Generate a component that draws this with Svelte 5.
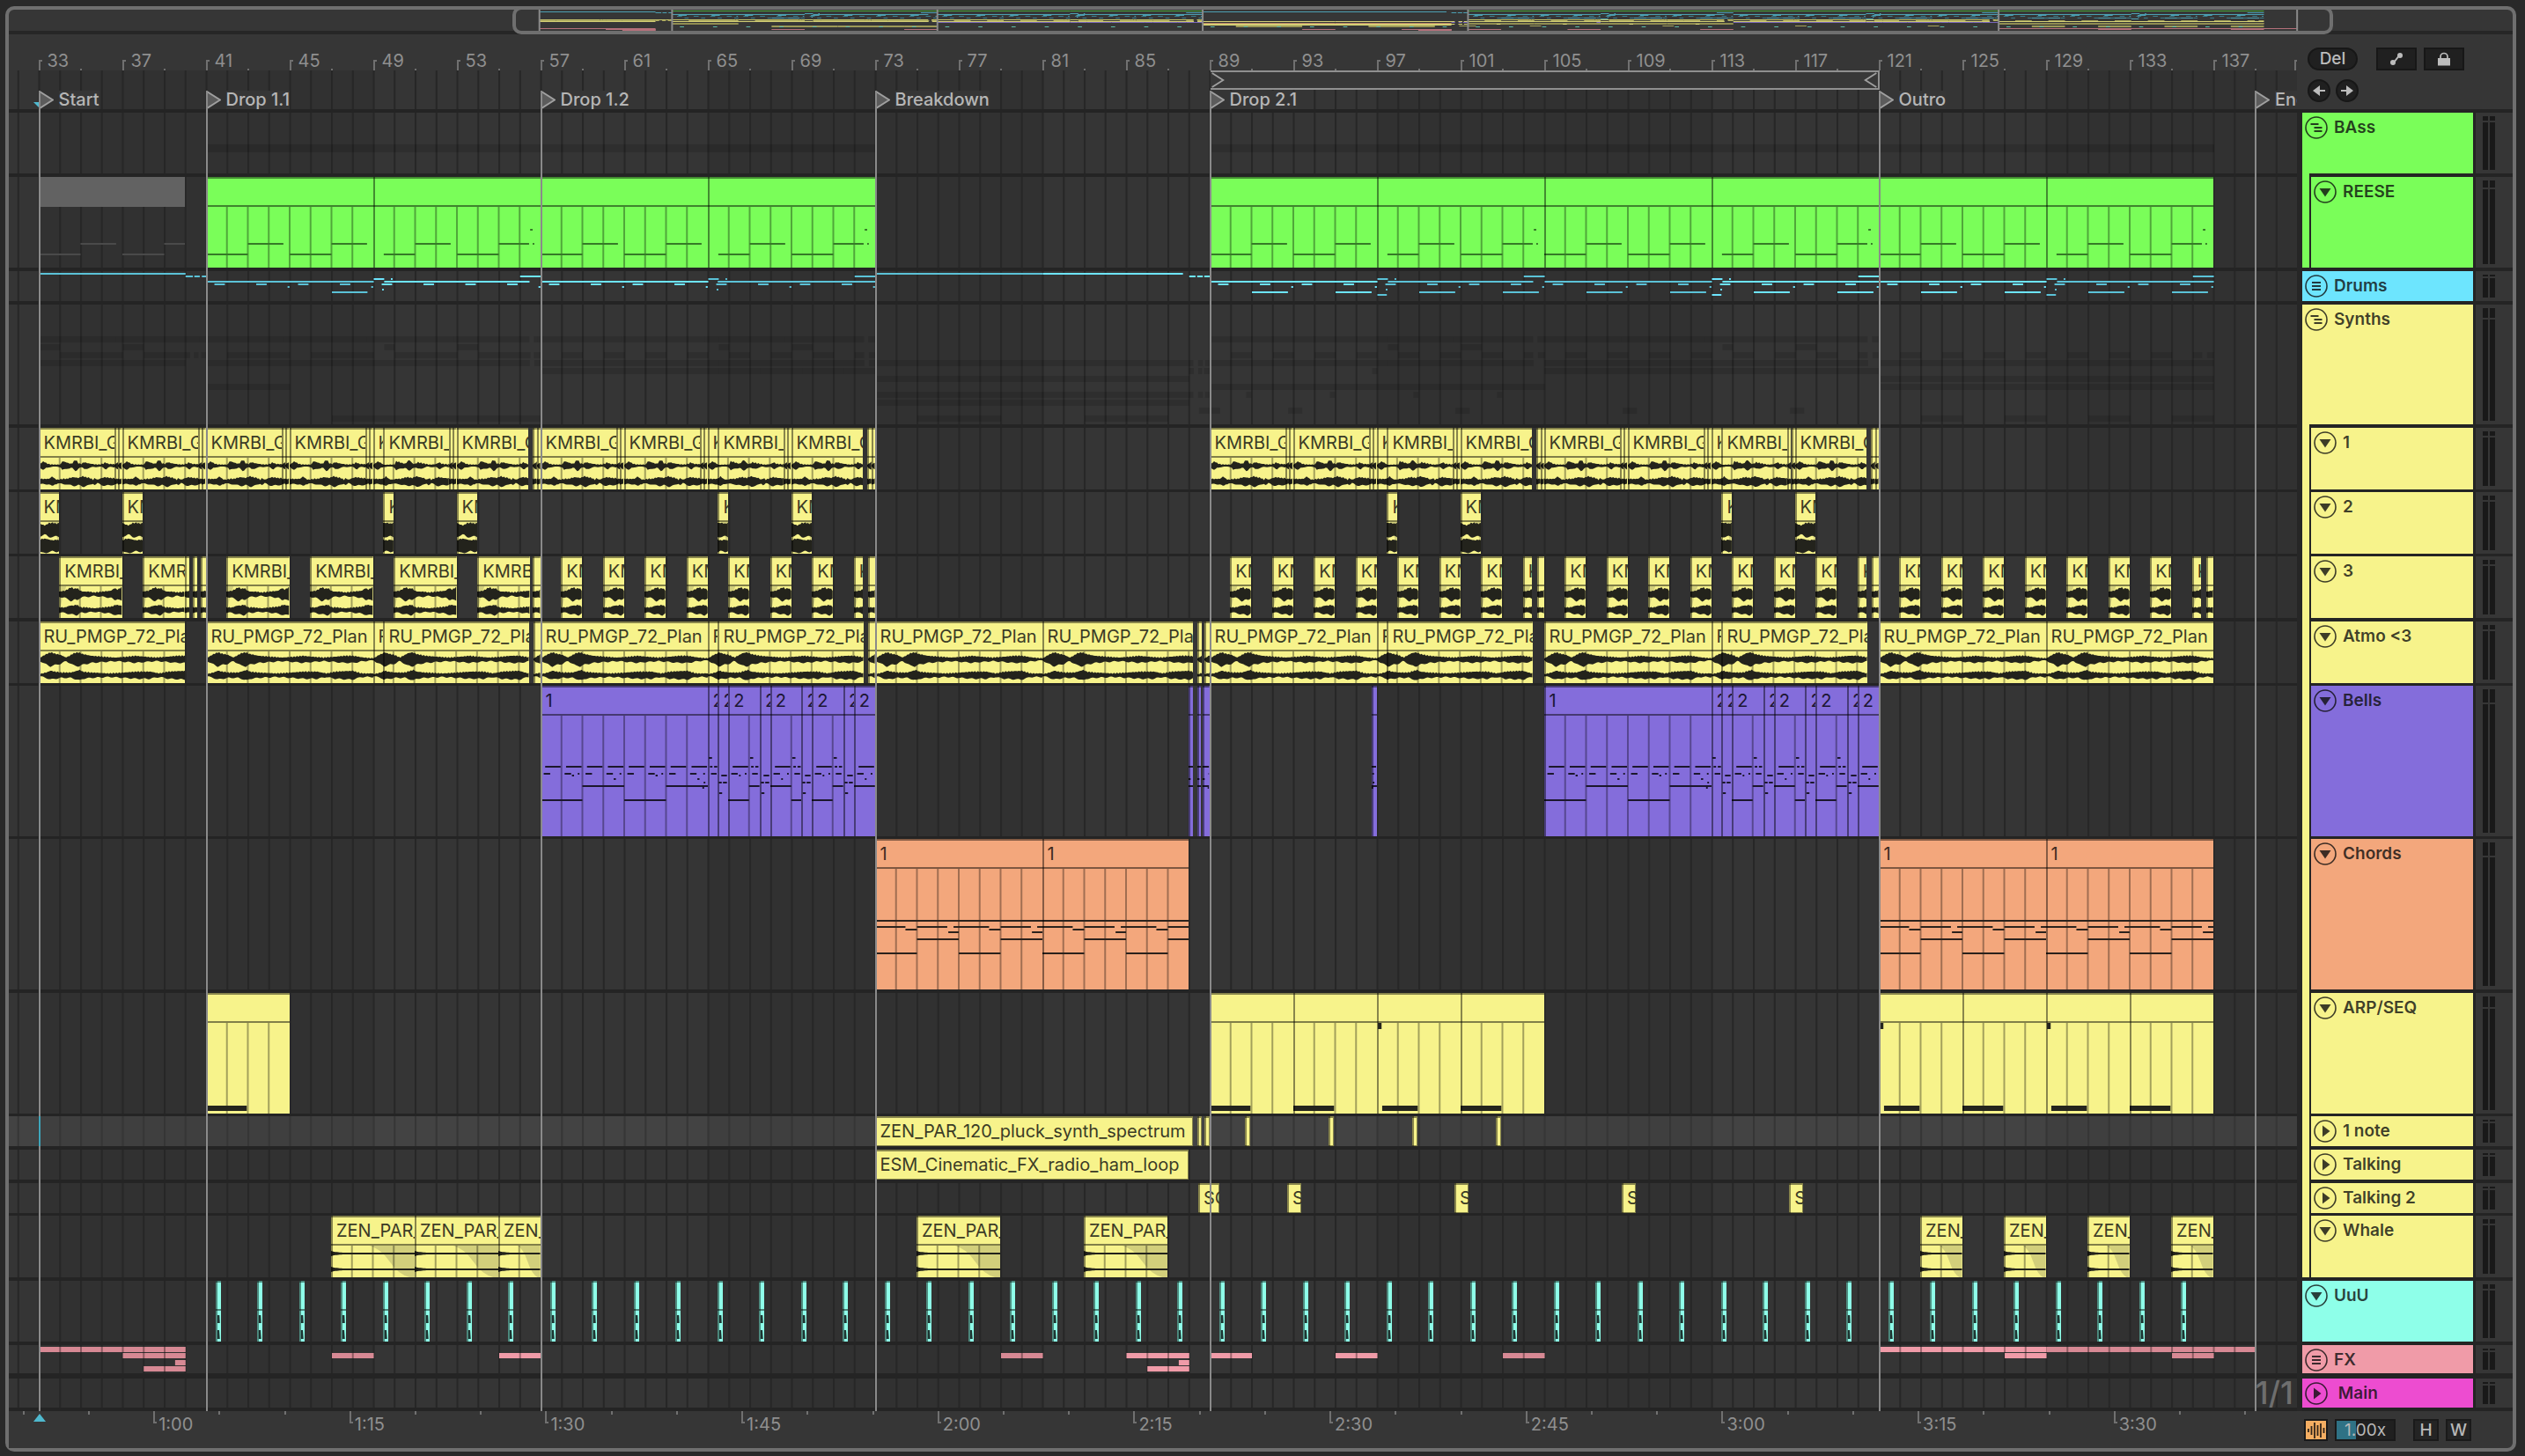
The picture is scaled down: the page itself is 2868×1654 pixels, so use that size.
<script lang="ts">
  type Clip = { s: number; e: number; label: string; off: number };
  type Note = [number, number, number];

  const START = 31.547;
  const SPAN = 109.43;
  const OV_START = 1;
  const OV_SPAN = 151;

  const pct = (bar: number) => `${((bar - START) / SPAN) * 100}%`;
  const wid = (bars: number) => `${(bars / SPAN) * 100}%`;
  const range = (a: number, b: number, step: number) => {
    const out: number[] = [];
    for (let v = a; v < b; v += step) out.push(v);
    return out;
  };
  const clip = (s: number, e: number, label = '', off = 0): Clip => ({ s, e, label, off });

  const gridBars = range(32, 141, 1);
  const rulerBars = range(33, 141, 4);
  const halfBars = range(35, 141, 4);
  const darkBands = [[33, 49], [65, 81], [97, 113], [129, START + SPAN]];
  const isDark = (bar: number) => darkBands.some(([a, b]) => bar >= a && bar < b);

  const locators = [
    { bar: 33, name: 'Start' },
    { bar: 41, name: 'Drop 1.1' },
    { bar: 57, name: 'Drop 1.2' },
    { bar: 73, name: 'Breakdown' },
    { bar: 89, name: 'Drop 2.1' },
    { bar: 121, name: 'Outro' },
    { bar: 139, name: 'End' }
  ];

  const times = range(50, 225, 5).map((t) => ({
    bar: 1 + t / 1.6,
    big: t % 15 === 0,
    label: `${Math.floor(t / 60)}:${String(t % 60).padStart(2, '0')}`
  }));

  /* ---------- clips ---------- */
  const K = 'KMRBI_G';
  const R = 'RU_PMGP_72_Plan';
  const row1: Clip[] = [];
  const tails = (b: number) => [clip(b + 3.65, b + 3.83), clip(b + 3.83, b + 4)];
  for (const b of [33, 37, 41, 45, 57, 61, 89, 93, 105, 109]) row1.push(clip(b, b + 3.65, K), ...tails(b));
  for (const b of [49, 65, 97, 113]) {
    row1.push(clip(b, b + 0.5, K), clip(b + 0.5, b + 3.65, K, 0.5), ...tails(b));
    row1.push(clip(b + 4, b + 7.45, K), clip(b + 7.65, b + 7.85), clip(b + 7.85, b + 8));
  }

  const row2: Clip[] = [clip(33, 34, K), clip(37, 38, K)];
  for (const b of [49, 65, 97, 113]) row2.push(clip(b + 0.5, b + 1, K, 0.5), clip(b + 4, b + 5, K));

  const row3: Clip[] = [clip(34, 37, K), clip(38, 40, K), clip(40, 40.22), clip(40.4, 40.62), clip(40.75, 41)];
  for (const b of [42, 46, 50]) row3.push(clip(b, b + 3, K));
  row3.push(clip(54, 56.5, K), clip(56.65, 57));
  for (const b of [57, 89, 105, 121]) {
    for (const k of [1, 3, 5, 7, 9, 11, 13]) row3.push(clip(b + k, b + k + 1, K));
    row3.push(clip(b + 15, b + 15.45, K), clip(b + 15.68, b + 16));
  }

  const atmo: Clip[] = [clip(33, 40, R)];
  for (const b of [41, 57, 89, 105]) {
    atmo.push(clip(b, b + 8, R), clip(b + 8, b + 8.5, R), clip(b + 8.5, b + 15.47, R, 0.5));
    if (b < 80) atmo.push(clip(b + 15.68, b + 16));
  }
  atmo.push(clip(73, 81, R), clip(81, 88.2, R), clip(88.42, 88.66), clip(88.75, 89), clip(121, 129, R), clip(129, 137, R));

  const bells: Clip[] = [];
  for (const b of [57, 105]) {
    bells.push(clip(b, b + 8, '1'));
    const cuts = [8, 8.5, 9, 10.5, 11, 12.5, 13, 14.5, 15, 16];
    for (let i = 0; i < cuts.length - 1; i++) bells.push(clip(b + cuts[i], b + cuts[i + 1], '2', cuts[i]));
  }
  bells.push(clip(88, 88.22, '', 7.5), clip(88.43, 88.62, '', 7.5), clip(88.7, 89, '', 7.5), clip(96.75, 97, '', 7.75));

  const chords = [clip(73, 81, '1'), clip(81, 88, '1'), clip(121, 129, '1'), clip(129, 137, '1')];
  const arp = [clip(41, 45), ...[89, 93, 97, 101, 121, 125, 129, 133].map((b) => clip(b, b + 4, '', [97, 121, 129].includes(b) ? 1 : 0))];
  const oneNote = [
    clip(73, 88.2, 'ZEN_PAR_120_pluck_synth_spectrum'),
    clip(88.42, 88.66), clip(88.75, 89),
    ...[90.72, 94.72, 98.72, 102.72].map((b) => clip(b, b + 0.24))
  ];
  const talking = [clip(73, 88, 'ESM_Cinematic_FX_radio_ham_loop')];
  const talking2 = [clip(88.47, 89.48, 'SC'), ...[92.73, 100.73, 108.73, 116.73].map((b) => clip(b, b + 0.68, 'SC'))];
  const Z = 'ZEN_PAR_120';
  const whale = [
    clip(47, 51, Z), clip(51, 55, Z), clip(55, 57, Z), clip(75, 79, Z), clip(83, 87, Z),
    ...[123, 127, 131, 135].map((b) => clip(b, b + 2, Z))
  ];
  const uuu = range(41.47, 136, 2).map((b) => clip(b, b + 0.25));
  const reese = [41, 49, 57, 65, 89, 97, 105, 113, 121, 129].map((b) => clip(b, b + 8, '', b < 80 ? (b - 41) % 16 : (b - 89) % 16));

  /* ---------- grouped mini lanes: [lane, start, end] ---------- */
  const drums: Note[] = [
    [0, 33, 40], [0, 73, 87.7],
    [1, 40, 40.35], [1, 40.42, 40.68], [1, 40.78, 41], [1, 88, 88.3], [1, 88.38, 88.65], [1, 88.72, 89],
    [3, 41, 49], [3, 49.5, 56.45], [3, 57, 65], [3, 65.45, 73], [3, 89, 97], [3, 97.5, 104.45],
    [3, 105, 113], [3, 113.5, 121], [3, 121, 129], [3, 129.5, 137], [7, 47, 48.7]
  ];
  for (const b of [56, 72, 104, 120, 136]) drums.push([1, b, b + 1]);
  for (const b of [49, 65, 97, 113, 129]) {
    drums.push([2, b, b + 0.5], [2, b + 0.82, b + 0.9], [6, b + 0.4, b + 0.48]);
    if (b > 90) drums.push([8, b, b + 0.45]);
  }
  for (const b of [...range(41, 73, 2), ...range(89, 137, 2)]) drums.push([4, b + 0.38, b + 0.88]);
  for (const b of [44, 48, 56, 60, 64, 68, 72, ...range(92, 137, 4)]) drums.push([5, b + 0.88, b + 0.97]);
  for (const b of range(91, 137, 4)) drums.push([7, b, b + 1.72]);

  const fx: Note[] = [
    [0, 33, 40], [0, 121, 139], [1, 37, 40], [1, 85, 88],
    [2, 39.5, 40], [2, 87.5, 88], [3, 38, 40], [3, 86, 88]
  ];
  for (const b of [47, 55, 79, 89, 95, 103, 127, 135]) fx.push([1, b, b + 2]);

  const splitShade = (list: Note[]) => {
    const out: { lane: number; s: number; e: number; dark: boolean }[] = [];
    for (const [lane, s, e] of list) {
      let a = s;
      while (a < e) {
        const next = Math.min(e, 33 + (Math.floor((a - 33) / 16) + 1) * 16);
        out.push({ lane, s: a, e: next, dark: isDark(a) });
        a = next;
      }
    }
    return out;
  };
  const drumCells = splitShade(drums);
  const fxCells = splitShade(fx);
  const synthLanes = [row1, row2, row3, atmo, bells, chords, arp, oneNote, talking, talking2, whale];

  /* ---------- note patterns: [y, start, end] relative to clip ---------- */
  function reeseNotes(c: Clip): Note[] {
    return c.off === 0
      ? [[54, 0, 2], [42, 2, 3.7], [54, 4, 6], [42, 6, 7.7]]
      : [[54, 0.5, 2], [42, 2, 3.7], [54, 4, 6], [42, 6, 7.45], [42, 7.62, 7.7], [26, 7.5, 7.62]];
  }
  function bellPhrase(): Note[] {
    const n: Note[] = [];
    for (let b = 0; b < 8; b++) {
      n.push([58, b + 0.22, b + 0.96]);
      n.push([66, b + 0.15, b + 0.46]);
      if (b % 2) n.push([66, b + 0.78, b + 0.86]);
      if (b % 4 === 1) n.push([68, b + 0.5, b + 0.6]);
      if (b % 4 === 3) n.push([72, b + 0.5, b + 0.6]);
    }
    n.push([76, 7.8, 7.88], [82, 7.74, 7.82], [80, 2, 4], [80, 6, 8], [96, 0, 2], [96, 4, 6]);
    for (let b = 8; b < 16; b += 2) {
      n.push([48, b + 0.05, b + 0.2], [58, b + 0.1, b + 0.22], [58, b + 0.3, b + 0.45], [66, b + 0.15, b + 0.42]);
      n.push([68, b + 0.68, b + 0.95], [76, b + 0.56, b + 0.7], [76, b + 0.76, b + 0.95], [88, b + 0.58, b + 0.72]);
      n.push([58, b + 1.22, b + 1.96], [66, b + 1.15, b + 1.46], [66, b + 1.8, b + 1.88]);
      const low = b % 4 === 0;
      n.push([low ? 68 : 72, b + 1.52, b + 1.6], [low ? 96 : 80, b + 1, b + 2]);
      if (b > 8) n.push([b === 12 ? 96 : 80, b, b + 0.5]);
    }
    return n;
  }
  const bellAll = bellPhrase();
  const bellNotes = (c: Clip): Note[] =>
    bellAll
      .filter(([, s, e]) => e > c.off && s < c.off + (c.e - c.s))
      .map(([y, s, e]) => [y, Math.max(0, s - c.off), Math.min(c.e - c.s, e - c.off)]);
  function chordNotes(c: Clip): Note[] {
    const L = c.e - c.s;
    const n: Note[] = [[59, 0, L]];
    for (let b = 0; b < L; b += 4) {
      n.push([66, b, b + 1.45], [69, b + 1.45, b + 2], [66, b + 2, b + 3.45], [72, b + 3.5, b + 4], [66, b + 3.75, b + 4], [80, b + 2, b + 4], [96, b, b + 2]);
    }
    return n.filter((v) => v[1] < L).map(([y, s, e]) => [y, s, Math.min(e, L)]);
  }

  /* ---------- waveforms: [position, amplitude], position in 71 units a bar ---------- */
  type Env = [number, number][];
  const envs: Record<string, [Env, Env]> = {
    row1: [
      [[0, 1], [8, 3], [17, 5], [25, 3], [40, 1], [74, 1], [80, 5], [92, 4], [100, 3], [112, 2], [118, 4], [123, 7], [130, 5], [137, 2], [145, 2], [155, 4], [165, 3], [180, 2], [200, 1], [218, 2], [228, 4], [236, 2], [290, 1]],
      [[0, 3], [20, 3], [35, 3], [47, 6], [55, 3], [65, 2], [80, 3], [95, 3], [105, 4], [118, 5], [135, 4], [150, 6], [160, 5], [175, 4], [185, 2], [192, 4], [200, 2], [215, 4], [225, 5], [245, 4], [290, 3]]
    ],
    row2: [
      [[0, 8], [12, 6], [22, 5], [34, 8], [50, 8], [60, 7], [71, 8]],
      [[0, 6], [12, 8], [24, 8], [36, 7], [48, 6], [60, 7], [71, 6]]
    ],
    row3: [
      [[0, 3], [20, 4], [32, 6], [42, 8], [52, 6], [62, 7], [72, 4], [82, 3], [100, 3], [120, 2], [150, 3], [178, 4], [190, 7], [200, 5], [213, 8]],
      [[0, 3], [20, 3], [38, 5], [50, 5], [60, 6], [75, 3], [90, 3], [120, 2], [150, 3], [180, 4], [195, 6], [213, 5]]
    ],
    atmo: [
      [[0, 1], [20, 5], [40, 8], [60, 6], [75, 5], [93, 2], [105, 4], [120, 7], [135, 8], [150, 6], [165, 5], [180, 4], [220, 3], [260, 2], [300, 3], [330, 4], [360, 3], [400, 2], [440, 3], [470, 4], [500, 4], [540, 2], [570, 1]],
      [[0, 1], [25, 3], [40, 5], [55, 4], [80, 3], [110, 3], [140, 6], [150, 4], [180, 3], [240, 2], [290, 3], [330, 4], [380, 4], [410, 2], [440, 4], [500, 5], [530, 2], [570, 2]]
    ],
    whale: [
      [[0, 3], [10, 2], [40, 1], [300, 1]],
      [[0, 3], [10, 2], [40, 1], [300, 1]]
    ]
  };
  function amp(env: Env, x: number) {
    for (let i = 1; i < env.length; i++) {
      if (x <= env[i][0]) {
        const [x0, a0] = env[i - 1];
        const [x1, a1] = env[i];
        return a0 + ((a1 - a0) * (x - x0)) / (x1 - x0);
      }
    }
    return env[env.length - 1][1];
  }
  function wave(kind: string, ch: 0 | 1, c: Clip, center: number) {
    const L = c.e - c.s;
    const env = envs[kind][ch];
    const jitter = kind === 'whale' ? 0 : 1.3;
    const top: string[] = [];
    const bottom: string[] = [];
    const steps = Math.max(2, Math.round(L / 0.07));
    for (let i = 0; i <= steps; i++) {
      const x = (L * i) / steps;
      const a = amp(env, (x + c.off) * 71.25);
      const k = i * 7 + ch * 3;
      const j1 = (Math.sin(k * 12.9898) * 0.5) * jitter;
      const j2 = (Math.sin(k * 78.233) * 0.5) * jitter;
      top.push(`${x.toFixed(3)},${(center - Math.max(1, a + j1)).toFixed(2)}`);
      bottom.unshift(`${x.toFixed(3)},${(center + Math.max(1, a + j2)).toFixed(2)}`);
    }
    return [...top, ...bottom].join(' ');
  }
  const inner = (c: Clip) => range(Math.floor(c.s) + 1, c.e, 1).map((b) => b - c.s);

  /* ---------- tracks ---------- */
  type Track = { name: string; h: number; sep: number; color: string; icon: string; kind: string; nested?: string; through?: boolean; clips?: Clip[]; selected?: boolean };
  const G = '#7afe59', Y = '#f7f38b';
  const tracks: Track[] = [
    { name: 'BAss', h: 69, sep: 4, color: G, icon: 'group', kind: 'bass', through: true },
    { name: 'REESE', h: 103, sep: 4, color: G, icon: 'down', kind: 'reese', nested: G, clips: reese },
    { name: 'Drums', h: 34, sep: 4, color: '#6de5fe', icon: 'list', kind: 'drums' },
    { name: 'Synths', h: 136, sep: 4, color: Y, icon: 'group', kind: 'synths', through: true },
    { name: '1', h: 70, sep: 3, color: Y, icon: 'down', kind: 'row1', nested: Y, through: true, clips: row1 },
    { name: '2', h: 70, sep: 3, color: Y, icon: 'down', kind: 'row2', nested: Y, through: true, clips: row2 },
    { name: '3', h: 70, sep: 4, color: Y, icon: 'down', kind: 'row3', nested: Y, through: true, clips: row3 },
    { name: 'Atmo <3', h: 70, sep: 3, color: Y, icon: 'down', kind: 'atmo', nested: Y, through: true, clips: atmo },
    { name: 'Bells', h: 171, sep: 3, color: '#846ddb', icon: 'down', kind: 'bells', nested: Y, through: true, clips: bells },
    { name: 'Chords', h: 171, sep: 4, color: '#f3a77c', icon: 'down', kind: 'chords', nested: Y, through: true, clips: chords },
    { name: 'ARP/SEQ', h: 137, sep: 3, color: Y, icon: 'down', kind: 'arp', nested: Y, through: true, clips: arp },
    { name: '1 note', h: 34, sep: 4, color: Y, icon: 'right', kind: 'flat', nested: Y, through: true, clips: oneNote, selected: true },
    { name: 'Talking', h: 34, sep: 4, color: Y, icon: 'right', kind: 'flat', nested: Y, through: true, clips: talking },
    { name: 'Talking 2', h: 34, sep: 3, color: Y, icon: 'right', kind: 'flat', nested: Y, through: true, clips: talking2 },
    { name: 'Whale', h: 70, sep: 4, color: Y, icon: 'down', kind: 'whale', nested: Y, clips: whale },
    { name: 'UuU', h: 69, sep: 4, color: '#8effe9', icon: 'down', kind: 'uuu', clips: uuu },
    { name: 'FX', h: 32, sep: 6, color: '#f09ba8', icon: 'list', kind: 'fx' },
    { name: '\u00a0Main', h: 33, sep: 4, color: '#ed4cd0', icon: 'right', kind: 'main' }
  ];

  const overviewRows: [Clip[], number, number, string][] = [
    [reese, 1, 1, '#4aa53a'], [row1, 11, 1, '#c7c46c'], [row2, 12, 1, '#a5a25b'], [row3, 12, 1, '#a5a25b'],
    [atmo, 13, 1, '#d5d175'], [bells, 14, 1, '#7866b8'], [chords, 15, 1, '#bd8568'], [arp, 15, 2, '#8f8c51'],
    [oneNote, 16, 1, '#d5d175'], [talking, 17, 1, '#d5d175'], [talking2, 18, 1, '#a5a25b'], [whale, 18, 2, '#9b9857'],
    [uuu, 19, 1, '#5fb8a8']
  ];
</script>

{#snippet icon(kind: string)}
  <svg class="glyph" viewBox="0 0 26 26" aria-hidden="true">
    <circle cx="13" cy="13" r="12" fill="none" stroke="currentColor" stroke-width="1.6" />
    {#if kind === 'down'}
      <path d="M6.5 9h13L13 18.5z" fill="currentColor" />
    {:else if kind === 'right'}
      <path d="M10 6.5v13L18.5 13z" fill="currentColor" />
    {:else if kind === 'group'}
      <path d="M6.5 9h9M10.5 13h9M10.5 17h9" stroke="currentColor" stroke-width="1.8" />
    {:else}
      <path d="M8 9h10M8 13h10M8 17h10" stroke="currentColor" stroke-width="1.8" />
    {/if}
  </svg>
{/snippet}

{#snippet clipBody(t: Track, c: Clip)}
  {@const L = c.e - c.s}
  {@const H = t.h - 34}
  <svg class="body" viewBox="0 0 {L} {H}" preserveAspectRatio="none" aria-hidden="true">
    {#if t.kind === 'whale'}
      <path d="M{L * 0.46} 0H{L}V{H}H{L * 0.94}Q{L * 0.8} {H * 0.9} {L * 0.7} {H * 0.5}Q{L * 0.6} {H * 0.1} {L * 0.46} 0z" fill="#d2cf7b" />
    {/if}
    {#if t.kind === 'row3' && L > 0.4}
      <path d="M0 0H0.35Q0.1 {H * 0.4} 0 {H}z" fill="#d2cf7b" />
    {/if}
    {#if t.kind === 'row2' && L > 0.4}
      <path d="M{L} 0H{L - 0.35}Q{L - 0.1} {H * 0.4} {L} {H}z" fill="#d2cf7b" />
    {/if}
    {#each inner(c) as x}
      <line x1={x} x2={x} y1="0" y2={H} class="barline" />
    {/each}
    {#if t.kind === 'reese'}
      {#each reeseNotes(c) as [y, s, e]}<rect x={s} y={y - 1} width={e - s} height="2" fill="#357a27" />{/each}
    {:else if t.kind === 'bells'}
      {#each bellNotes(c) as [y, s, e]}<rect x={s} y={y - 1} width={e - s} height="2" fill="#1c172d" />{/each}
    {:else if t.kind === 'chords'}
      {#each chordNotes(c) as [y, s, e]}<rect x={s} y={y - 1} width={e - s} height="2" fill="#2b221c" />{/each}
    {:else if t.kind === 'arp'}
      <rect x={c.off ? 0.25 : 0} y="94" width={c.off ? 1.7 : 1.95} height="6" fill="#25251e" />
      {#if c.off}<rect x="0.05" y="0" width="0.17" height="7" fill="#25251e" />{/if}
    {:else if t.kind === 'uuu'}
      <path d="M0.08 5H0.18L0.2 14H0.08zM0.08 22H0.17L0.2 32H0.08z" fill="#1d3532" />
    {:else}
      <polygon points={wave(t.kind, 0, c, 9)} fill="#23231c" />
      <polygon points={wave(t.kind, 1, c, 27)} fill="#23231c" />
    {/if}
  </svg>
{/snippet}

<main class="app">
  <div class="frame">
    <div class="overview">
      <svg class="fill" viewBox="{OV_START} 0 {OV_SPAN} 24" preserveAspectRatio="none" aria-hidden="true">
        {#each drums as [lane, s, e]}
          <rect x={s} y={2 + lane} width={e - s} height="1" fill="#4c9fb2" />
        {/each}
        {#each [...range(41, 73, 1), ...range(89, 137, 1)] as b}
          <rect x={b + 0.3} y="7" width="0.3" height="1" fill="#3c7c8b" />
          <rect x={b + 0.75} y="9" width="0.25" height="1" fill="#3c7c8b" />
        {/each}
        {#each overviewRows as [list, y, h, color]}
          {#each list as c}<rect x={c.s} {y} width={c.e - c.s} height={h} fill={color} />{/each}
        {/each}
        {#each fx as [lane, s, e]}
          <rect x={s} y={lane === 0 ? 21 : 22} width={e - s} height={lane > 1 ? 2 : 1} fill="#b5707b" />
        {/each}
        {#each locators as l}
          <line x1={l.bar} x2={l.bar} y1="0" y2="24" class="ovline" />
        {/each}
      </svg>
      <div class="viewport" style="left:{((START - OV_START) / OV_SPAN) * 100}%;right:{100 - ((START - OV_START + SPAN) / OV_SPAN) * 100}%"></div>
    </div>

    <div class="columns">
      <section class="timeline" aria-label="Arrangement">
        <svg class="grid" viewBox="{START} 0 {SPAN} 100" preserveAspectRatio="none" aria-hidden="true">
          {#each darkBands as [a, b]}<rect x={a} y="0" width={b - a} height="100" fill="#313131" />{/each}
          {#each gridBars as b}<line x1={b} x2={b} y1="0" y2="100" />{/each}
        </svg>

        <div class="ruler">
          {#each rulerBars as b}
            <span class="tick" style="left:{pct(b)}"></span>
            <span class="num" style="left:{pct(b)}">{b}</span>
          {/each}
          <span class="tick" style="left:{pct(140.9)}"></span>
          {#each halfBars as b}<span class="tick small" style="left:{pct(b)}"></span>{/each}
        </div>
        <div class="looprow">
          <div class="loop" style="left:{pct(89)};width:{wid(32)}">
            <svg viewBox="0 0 16 20" aria-hidden="true"><path d="M1 1l14 9-14 9" /></svg>
            <svg viewBox="0 0 16 20" aria-hidden="true"><path d="M15 1L1 10l14 9" /></svg>
          </div>
        </div>
        <div class="locrow">
          <svg class="insert" style="left:{pct(33)}" viewBox="0 0 14 7" aria-hidden="true"><path d="M0 0h14L7 7z" /></svg>
          {#each locators as l}
            <div class="loc" style="left:{pct(l.bar)}">
              <svg viewBox="0 0 17 21" aria-hidden="true"><path d="M1 1l15 9.5L1 20z" /></svg>
              <span>{l.name}</span>
            </div>
          {/each}
        </div>
        <div class="rule"></div>

        {#each tracks as t}
          <div class="lane {t.kind}" class:selected={t.selected} style="height:{t.h + t.sep}px;border-bottom-width:{t.sep}px;--c:{t.color}">
            {#if t.kind === 'bass'}
              <div class="ghost" style="left:{pct(41)};width:{wid(32)}"></div>
              <div class="ghost" style="left:{pct(89)};width:{wid(48)}"></div>
            {:else if t.kind === 'synths'}
              <svg class="fill" viewBox="{START} 0 {SPAN} 136" preserveAspectRatio="none" aria-hidden="true">
                {#each synthLanes as lane, i}
                  {#each lane as c}<rect x={c.s} y={36 + i * 9} width={c.e - c.s} height="7" fill="#000" opacity="0.12" />{/each}
                {/each}
              </svg>
            {:else if t.kind === 'drums'}
              <svg class="fill" viewBox="{START} 0 {SPAN} 34" preserveAspectRatio="none" aria-hidden="true">
                {#each drumCells as d}<rect x={d.s} y={2 + d.lane * 3} width={d.e - d.s} height="2" fill={d.dark ? '#5bc2d7' : '#6de5fe'} />{/each}
              </svg>
            {:else if t.kind === 'fx'}
              <svg class="fill" viewBox="{START} 0 {SPAN} 32" preserveAspectRatio="none" aria-hidden="true">
                {#each fxCells as d}
                  <rect x={d.s} y={[2, 9, 17, 24][d.lane]} width={d.e - d.s} height="6" fill={d.dark ? '#d78994' : '#f09ba8'} />
                  {#each range(Math.floor(d.s) + 1, d.e, 1) as x}
                    <line x1={x} x2={x} y1={[2, 9, 17, 24][d.lane]} y2={[8, 15, 23, 30][d.lane]} class="barline" />
                  {/each}
                {/each}
              </svg>
            {/if}
            {#if t.kind === 'reese'}
              <div class="muted" style="left:{pct(33)};width:{wid(7)}">
                <div></div>
                <svg viewBox="0 0 7 69" preserveAspectRatio="none" aria-hidden="true">
                  <path d="M0 53h2v2H0zM4 53h2v2H4zM2 41h1.7v2H2zM6 41h1v2H6z" fill="#4a4a4a" />
                </svg>
              </div>
            {/if}
            {#each t.clips ?? [] as c}
              <div class="clip" class:flat={t.kind === 'flat'} style="left:{pct(c.s)};width:{wid(c.e - c.s)}">
                <div class="title">{c.label}</div>
                {#if t.kind !== 'flat'}{@render clipBody(t, c)}{/if}
              </div>
            {/each}
            {#if t.kind === 'main'}<span class="zoomlevel">1/1</span>{/if}
          </div>
        {/each}

        <div class="times">
          <svg class="insert" style="left:{pct(33)}" viewBox="0 0 14 9" aria-hidden="true"><path d="M0 9h14L7 0z" /></svg>
          {#each times as t}
            <span class="tick" class:small={!t.big} style="left:{pct(t.bar)}"></span>
            {#if t.big}<span class="num" style="left:{pct(t.bar)}">{t.label}</span>{/if}
          {/each}
        </div>

        {#each locators as l}<div class="locline" style="left:{pct(l.bar)}"></div>{/each}
        <div class="playhead" style="left:{pct(33)}"></div>
      </section>

      <aside class="panel">
        <div class="controls">
          <div class="btnrow">
            <button class="pill" type="button">Del</button>
            <button class="square push" type="button" aria-label="Automation mode">
              <svg viewBox="0 0 16 16" aria-hidden="true"><path d="M4 12.5C7 11 8.500 6 12 3.500" fill="none" stroke="currentColor" stroke-width="2" /><circle cx="4" cy="12" r="3" /><circle cx="12" cy="4" r="3" /></svg>
            </button>
            <button class="square" type="button" aria-label="Lock envelopes">
              <svg viewBox="0 0 16 16" aria-hidden="true"><path d="M4 8V5.500a4 4 0 0 1 8 0V8" fill="none" stroke="currentColor" stroke-width="1.700" /><path d="M1 7h14v8.500H1z" /></svg>
            </button>
          </div>
          <div class="btnrow">
            <button class="round" type="button" aria-label="Previous locator">
              <svg viewBox="0 0 16 16" aria-hidden="true"><path d="M1 8l8-6v12zM8 7h7v2H8z" /></svg>
            </button>
            <button class="round" type="button" aria-label="Next locator">
              <svg viewBox="0 0 16 16" aria-hidden="true"><path d="M15 8L7 2v12zM8 7H1v2h7z" /></svg>
            </button>
          </div>
        </div>
        <div class="rule"></div>
        <div class="heads">
          {#each tracks as t}
            <div class="head" class:nested={t.nested} style="height:{t.h + t.sep}px;--c:{t.color};--g:{t.nested ?? t.color};--sep:{t.sep}px">
              <div class="strip" class:through={t.through}></div>
              <div class="name">
                <button type="button" aria-label="Fold {t.name.trim()}">{@render icon(t.icon)}</button>
                <span>{t.name}</span>
              </div>
              <div class="meter"><i></i><i></i><i></i><i></i></div>
            </div>
          {/each}
        </div>
        <div class="footer">
          <button class="follow" type="button" aria-label="Audio waveform zoom">
            <svg viewBox="0 0 22 20" aria-hidden="true"><path d="M2 8v4M5.500 5v10M9 1v18M12.500 4v12M16 2v16M19.500 7v6" stroke="#33261a" stroke-width="1.800" /></svg>
          </button>
          <input class="zoom" aria-label="Waveform vertical zoom" value="1.00x" />
          <button class="hw push" type="button">H</button>
          <button class="hw" type="button">W</button>
        </div>
      </aside>
    </div>
  </div>
</main>

<style>
  :global(body) { margin: 0; background: #292929; }
  .app { box-sizing: border-box; min-height: 100vh; padding: 7px 10px 5px 6px; background: #292929; font: 500 19px/24px Inter, "Liberation Sans", sans-serif; color: #b4b4b4; }
  .frame { border: 4px solid #6f6f6f; border-radius: 10px; background: #363636; }
  button, input { font: inherit; color: inherit; margin: 0; padding: 0; border: 0; background: none; }

  .overview { position: relative; height: 24px; border-bottom: 4px solid #262626; }
  .fill { position: absolute; inset: 0; width: 100%; height: 100%; }
  .ovline { stroke: #8a8a8a; stroke-width: 2px; vector-effect: non-scaling-stroke; }
  .viewport { position: absolute; top: -4px; bottom: -4px; margin: 0 -4px 0 -3px; box-sizing: border-box; border: 4px solid #6f6f6f; border-radius: 10px; }

  .columns { display: grid; grid-template-columns: minmax(0, 1fr) 245px; }
  .timeline { position: relative; overflow: hidden; }
  .grid { position: absolute; left: 0; top: 41px; width: 100%; height: calc(100% - 83px); background: #353535; }
  .grid line { stroke: #272727; stroke-width: 2px; vector-effect: non-scaling-stroke; }

  .ruler, .looprow, .locrow, .times, .lane { position: relative; }
  .ruler { height: 41px; color: #8f8f8f; font-weight: 400; font-size: 20px; }
  .tick { position: absolute; bottom: 0; width: 4px; height: 12px; margin-left: -1px; box-sizing: border-box; border: solid #707070; border-width: 2px 0 0 2px; }
  .tick.small { height: 2px; width: 2px; }
  .num { position: absolute; bottom: 0; margin-left: 9px; line-height: 22px; }
  .looprow { height: 23px; }
  .loop { position: absolute; top: 0; height: 22px; box-sizing: border-box; border: 2px solid #909090; border-width: 2px 2px 2px 0; background: #383838; display: flex; justify-content: space-between; }
  .loop svg { width: 16px; height: 18px; fill: none; stroke: #a0a0a0; stroke-width: 2; }
  .locrow { height: 21px; }
  .loc { position: absolute; top: 0; height: 21px; margin-left: -1px; display: flex; align-items: center; gap: 6px; }
  .loc svg { width: 17px; height: 21px; fill: #5c5c5c; stroke: #a0a0a0; stroke-width: 2; }
  .loc span { font-size: 20px; line-height: 21px; background: #363636; white-space: nowrap; color: #b6b6b6; }
  .insert { position: absolute; width: 14px; margin-left: -7px; fill: #4fb9cf; }
  .locrow .insert { bottom: 1px; height: 7px; }
  .times .insert { top: 3px; height: 9px; }
  .rule { position: relative; height: 4px; background: #242424; }

  .lane { box-sizing: border-box; border-bottom: 4px solid #242424; }
  .lane.selected { background: rgba(255, 255, 255, 0.07); }
  .ghost { position: absolute; top: 36px; height: 9px; background: rgba(0, 0, 0, 0.13); }
  .muted { position: absolute; top: 0; bottom: 0; display: flex; flex-direction: column; }
  .muted div { height: 34px; background: #626262; }
  .muted svg { flex: 1; min-height: 0; width: 100%; }
  .clip, .muted { margin-left: -1px; }
  .clip { position: absolute; top: 0; bottom: 0; box-sizing: border-box; display: flex; flex-direction: column; overflow: hidden; background: linear-gradient(rgba(0, 0, 0, 0.45), rgba(0, 0, 0, 0.45)) top / 100% 2px no-repeat, var(--c); }
  .clip::before { content: ""; position: absolute; left: 0; top: 0; bottom: 0; width: 2px; background: rgba(0, 0, 0, 0.45); }
  .title { height: 32px; box-sizing: border-box; padding: 2px 0 0 6px; font-size: 20px; line-height: 31px; white-space: nowrap; overflow: hidden; color: #3b3b26; font-weight: 400; box-shadow: 0 2px 0 rgba(0, 0, 0, 0.48); }
  .bells .title { color: #1c1633; }
  .chords .title { color: #3d2a1f; }
  .flat .title { height: 34px; box-shadow: none; }
  .clip.flat { box-shadow: inset 0 -1px 0 #85834a, inset -1px 0 0 #85834a; }
  .body { flex: 1; min-height: 0; width: 100%; margin-top: 2px; display: block; }
  .barline { stroke: rgba(0, 0, 0, 0.34); stroke-width: 2px; vector-effect: non-scaling-stroke; }
  .zoomlevel { position: absolute; right: 4px; top: 0; font-size: 36px; line-height: 33px; color: #6e6e6e; }

  .times { height: 42px; color: #8f8f8f; font-weight: 400; font-size: 20px; background: #363636; }
  .times .tick { top: 0; bottom: auto; height: 14px; border-width: 0 0 2px 2px; }
  .times .tick.small { height: 4px; }
  .times .num { top: 4px; bottom: auto; margin-left: 5px; }
  .locline { position: absolute; top: 64px; bottom: 42px; width: 2px; margin-left: -1px; background: #8a8a8a; }
  .playhead { position: absolute; bottom: 343px; height: 34px; width: 2px; margin-left: -1px; background: #3fa6bb; }

  .controls { box-sizing: border-box; height: 85px; padding: 15px 55px 0 12px; display: flex; flex-direction: column; gap: 10px; }
  .btnrow { display: flex; gap: 6px; }
  .btnrow button { box-sizing: border-box; height: 26px; display: flex; align-items: center; justify-content: center; border: 2px solid #171717; background: #202020; color: #bcbcbc; }
  .btnrow svg { width: 16px; height: 16px; fill: currentColor; }
  .pill { width: 57px; border-radius: 13px; }
  .square { width: 46px; }
  .push { margin-left: auto; }
  .btnrow .square + .square { margin-left: 2px; }
  .btnrow .round { width: 26px; border-radius: 50%; }
  .heads { border-left: 6px solid #262626; background: #242424; }
  .head { display: grid; grid-template-columns: 8px minmax(0, 1fr) 42px; column-gap: 0; }
  .strip { background: var(--g); margin-bottom: var(--sep); }
  .strip.through { margin-bottom: 0; }
  .name { margin: 0 3px var(--sep) 0; padding: 4px 0 0 0; background: var(--c); display: flex; align-items: flex-start; gap: 7px; color: rgba(14, 14, 14, 0.8); font-weight: 600; line-height: 26px; overflow: hidden; white-space: nowrap; }
  .name button { margin-left: -5px; width: 26px; height: 26px; flex: none; }
  .nested .name { margin-left: 2px; padding-left: 8px; }
  .glyph { display: block; width: 26px; height: 26px; }
  .head:not(.nested) .name { overflow: visible; }
  .meter { margin-bottom: var(--sep); background: #363636; padding: 4px 20px 4px 8px; display: grid; grid-template: minmax(0, 1fr) minmax(0, 10fr) / 6px 6px; gap: 2px; }
  .meter i { background: #191919; }

  .footer { height: 42px; box-sizing: border-box; padding: 9px 47px 0 8px; display: flex; gap: 8px; }
  .footer button, .zoom { box-sizing: border-box; height: 25px; border: 2px solid #1a1a1a; background: #242424; color: #b8b8b8; display: flex; align-items: center; justify-content: center; font-weight: 400; }
  .footer .follow { width: 27px; background: #f4ae62; }
  .follow svg { width: 22px; height: 20px; }
  .zoom { width: 69px; text-align: center; background: linear-gradient(#2f7285, #2f7285) left / 22px 100% no-repeat #202020; }
  .footer .hw { width: 29px; font-weight: 500; }
</style>
